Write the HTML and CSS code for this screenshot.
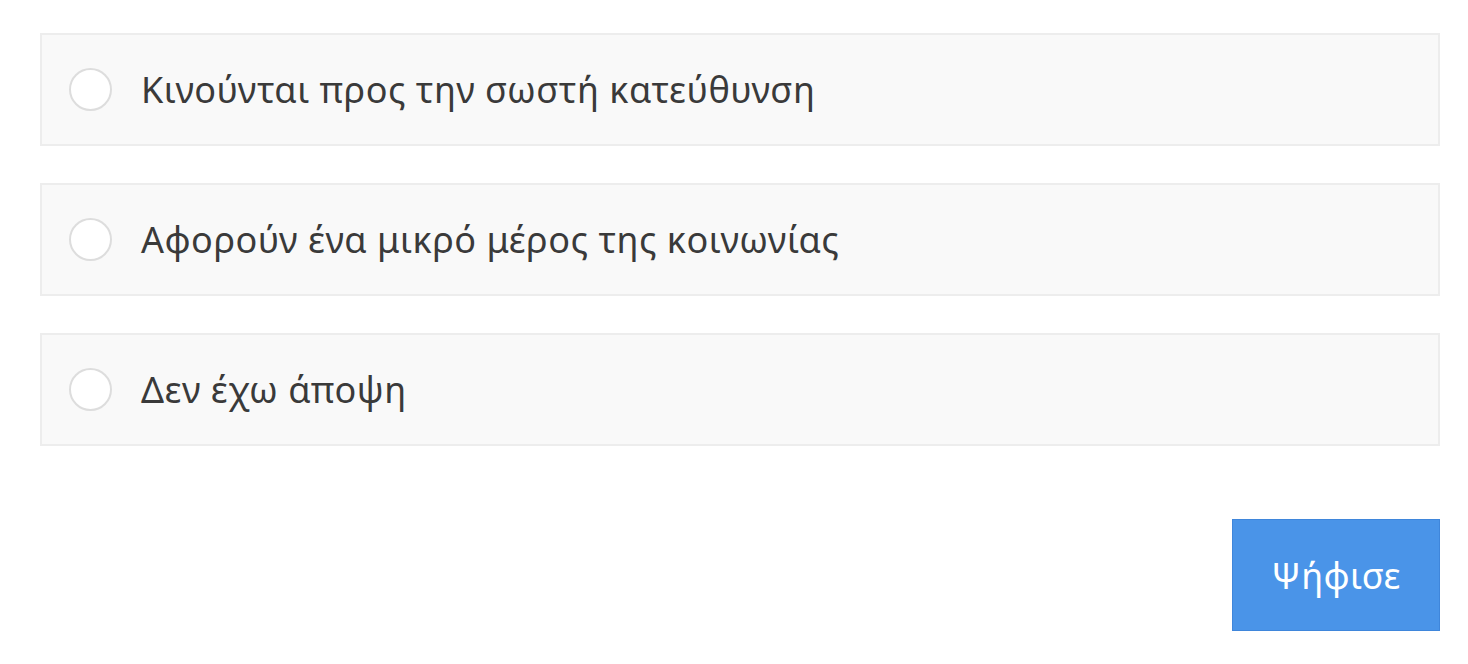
FILE: index.html
```html
<!DOCTYPE html>
<html lang="el">
<head>
<meta charset="utf-8">
<title>Ψηφοφορία</title>
<link rel="stylesheet" href="styles.css">
</head>
<body>
<form class="poll">
  <div class="options">
    <label class="option"><span class="radio"></span><span class="label">Κινούνται προς την σωστή κατεύθυνση</span></label>
    <label class="option"><span class="radio"></span><span class="label">Αφορούν ένα μικρό μέρος της κοινωνίας</span></label>
    <label class="option"><span class="radio"></span><span class="label">Δεν έχω άποψη</span></label>
  </div>
  <div class="actions">
    <button type="button" class="vote">Ψήφισε</button>
  </div>
</form>
</body>
</html>
```
FILE: styles.css
```css
html, body {
  margin: 0;
  padding: 0;
  background: #ffffff;
}
body {
  font-family: "Noto Sans", "DejaVu Sans", sans-serif;
  color: #333333;
}
.poll {
  width: 1400px;
  padding: 33px 0 0 40px;
  display: flex;
  flex-direction: column;
  gap: 73px;
}
.options {
  display: flex;
  flex-direction: column;
  gap: 37px;
}
.option {
  box-sizing: border-box;
  height: 113px;
  border: 2px solid #ededed;
  background: #f9f9f9;
  display: flex;
  align-items: center;
  padding-left: 27px;
  gap: 29px;
}
.radio {
  box-sizing: border-box;
  width: 43px;
  height: 43px;
  border-radius: 50%;
  border: 2px solid #dddddd;
  background: #ffffff;
  flex: none;
}
.label {
  font-size: 36px;
  letter-spacing: 0.5px;
  line-height: 1;
  color: #3a3a3a;
}
.actions {
  display: flex;
  justify-content: flex-end;
}
.vote {
  box-sizing: border-box;
  width: 208px;
  height: 112px;
  border: 1px solid #3f86db;
  background: #4a94e8;
  color: #ffffff;
  font-family: "Noto Sans", "DejaVu Sans", sans-serif;
  font-size: 36px;
  letter-spacing: 0.4px;
  padding: 0;
  cursor: pointer;
}
```
